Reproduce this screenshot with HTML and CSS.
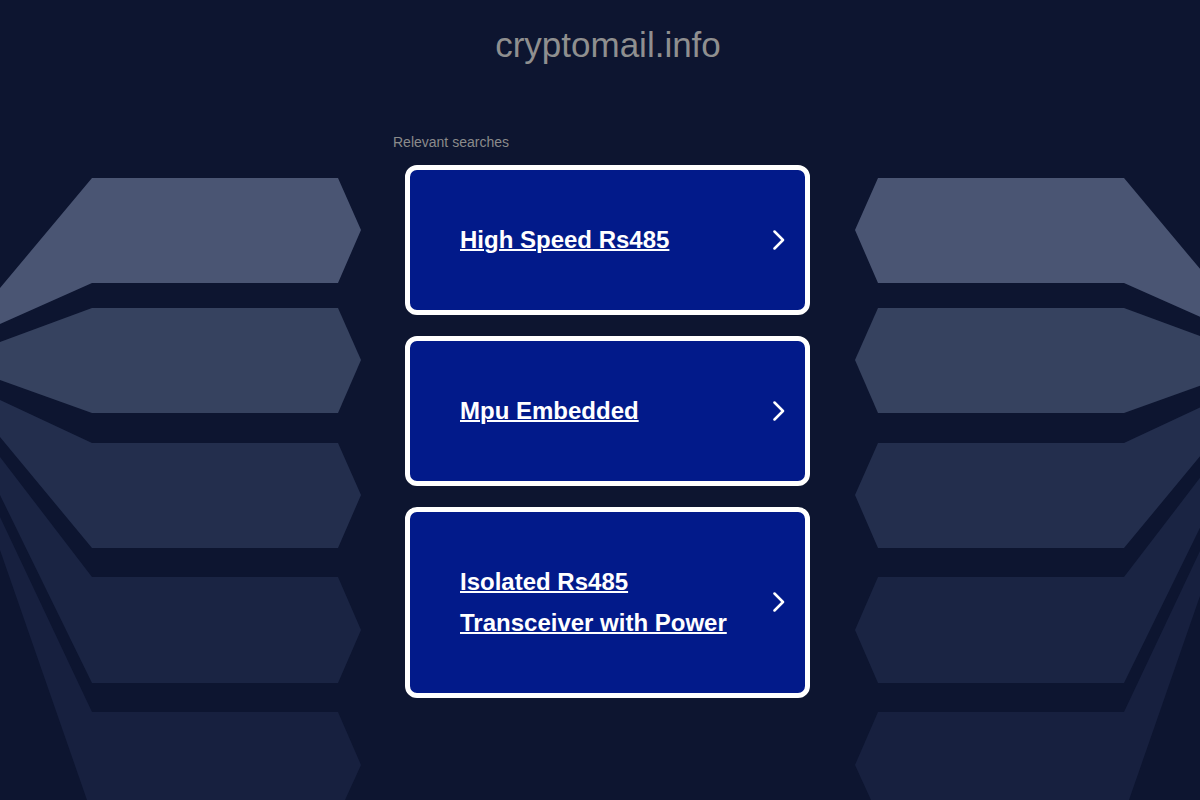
FILE: index.html
```html
<!DOCTYPE html>
<html lang="en">
<head>
    <meta charset="UTF-8">
    <meta name="viewport" content="width=device-width, initial-scale=1.0">
    <title>cryptomail.info</title>
    <link rel="stylesheet" href="styles.css">
</head>
<body>
    <!-- decorative background -->
    <svg class="backdrop" viewBox="0 0 1200 800" width="1200" height="800" aria-hidden="true">
        <g id="side">
            <polygon fill="#4a5573" points="0,288 92,178 338,178 361,230 338,283 92,283 0,324"/>
            <polygon fill="#36425f" points="0,342 92,308 338,308 361,360 338,413 92,413 0,380"/>
            <polygon fill="#232e4d" points="0,400 92,443 338,443 361,495 338,548 92,548 0,437"/>
            <polygon fill="#1a2443" points="0,457 92,577 338,577 361,630 338,683 92,683 0,495"/>
            <polygon fill="#17203f" points="0,517 92,712 338,712 361,765 345,800 87,800 0,550"/>
        </g>
        <use href="#side" transform="translate(1216 0) scale(-1 1)"/>
    </svg>

    <div class="page">
        <h1 class="domain">cryptomail.info</h1>

        <div class="searches">
            <p class="searches-title">Relevant searches</p>

            <a class="result" href="#">
                <span class="result-text">High Speed Rs485</span>
                <svg class="chevron" viewBox="0 0 12 20" width="12" height="20"><polyline points="1.5,1.5 10,10 1.5,18.5"/></svg>
            </a>
            <a class="result" href="#">
                <span class="result-text">Mpu Embedded</span>
                <svg class="chevron" viewBox="0 0 12 20" width="12" height="20"><polyline points="1.5,1.5 10,10 1.5,18.5"/></svg>
            </a>
            <a class="result" href="#">
                <span class="result-text">Isolated Rs485 Transceiver with Power</span>
                <svg class="chevron" viewBox="0 0 12 20" width="12" height="20"><polyline points="1.5,1.5 10,10 1.5,18.5"/></svg>
            </a>
        </div>
    </div>
</body>
</html>
```

FILE: styles.css
```css
body {
    margin: 0 0 0 16px;
    background-color: #0d1530;
    font-family: "Liberation Sans", Arial, sans-serif;
    overflow: hidden;
}

/* fondo decorativo */
.backdrop {
    position: absolute;
    top: 0;
    left: 0;
    z-index: 0;
}

.page {
    position: relative;
    z-index: 1;
    display: flex;
    flex-direction: column;
    align-items: center;
}

.domain {
    margin: 0;
    padding-top: 25px;
    font-size: 35px;
    line-height: 40px;
    font-weight: normal;
    color: #8f8f8f;
}

.searches {
    width: 430px;
}

.searches-title {
    margin: 69px 0 15px;
    font-size: 14px;
    line-height: 16px;
    color: #8b8b8b;
}

.result {
    display: flex;
    align-items: center;
    justify-content: space-between;
    width: 405px;
    box-sizing: border-box;
    margin: 0 0 21px 12px;
    padding: 49px 20px 50px 50px;
    border: 5px solid #fff;
    border-radius: 12px;
    background-color: #021a8a;
    color: #fff;
    text-decoration: none;
}

.result-text {
    max-width: 280px;
    font-size: 24px;
    line-height: 41px;
    font-weight: bold;
    text-decoration: underline;
    text-decoration-thickness: 2px;
}

.chevron {
    flex-shrink: 0;
    fill: none;
    stroke: #fff;
    stroke-width: 2.5;
    stroke-linecap: round;
    stroke-linejoin: round;
}
```
